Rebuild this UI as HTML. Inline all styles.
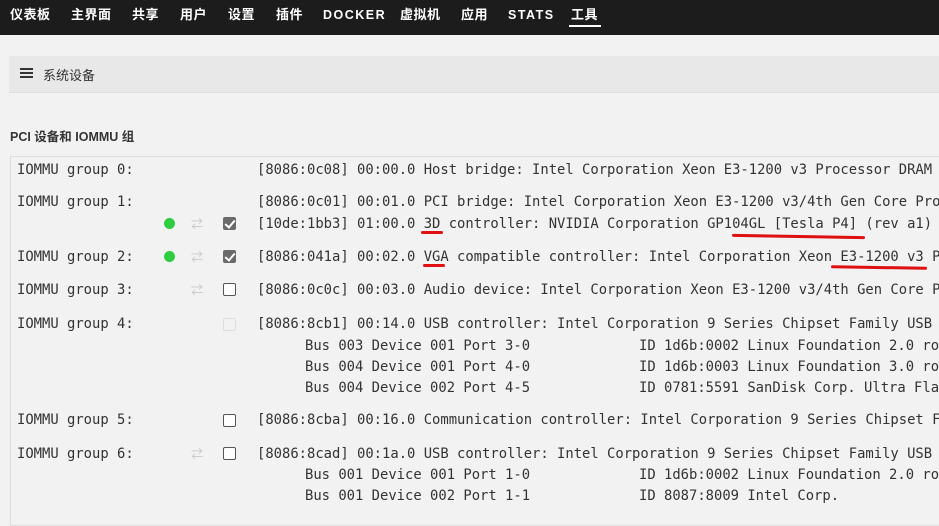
<!DOCTYPE html>
<html><head><meta charset="utf-8"><style>
*{margin:0;padding:0;box-sizing:border-box}
body{width:939px;height:517px;overflow:hidden;background:#f2f2f2;font-family:"Liberation Sans","Noto Sans CJK SC",sans-serif;position:relative}
.nav{position:absolute;left:0;top:0;width:939px;height:35px;background:#1c1c1c}
.nav span{position:absolute;top:6px;height:18px;line-height:18px;color:#fff;font-weight:bold;font-size:13px;letter-spacing:0.5px}
.nav span.l{letter-spacing:1.5px;font-size:12.5px}
.bar{position:absolute;left:9px;top:56px;width:930px;height:37px;background:#e8e8e8;border-bottom:1px solid #ddd}
.box{position:absolute;left:10px;top:156px;width:940px;height:370px;border:1px solid #ddd;background:#f2f2f2}
.m{position:absolute;font-family:"DejaVu Sans Mono","Liberation Mono",monospace;font-size:13.85px;color:#333;white-space:pre;line-height:16px}
.dot{position:absolute;width:11px;height:11px;border-radius:50%;background:#2ecc40}
.cb{position:absolute;width:13px;height:13px;border:1px solid #555;border-radius:2px;background:#fff}
.cb.on{background:#6a6a6a;border-color:#6a6a6a}
.cb.on:after{content:"";position:absolute;left:3px;top:0px;width:4px;height:8px;border:solid #fff;border-width:0 2px 2px 0;transform:rotate(40deg)}
.cb.dis{border-color:#ddd;background:#f2f2f2}
.rf{position:absolute;color:#c8c8c8;font-size:12px}
.ul{position:absolute;height:3px;background:#e01010;border-radius:2px}
</style></head><body>
<div class="nav">
<span style="left:10px">仪表板</span><span style="left:71px">主界面</span><span style="left:132px">共享</span><span style="left:180px">用户</span><span style="left:228px">设置</span><span style="left:276px">插件</span>
<span class="l" style="left:323px">DOCKER</span><span style="left:400px">虚拟机</span><span style="left:461px">应用</span><span class="l" style="left:508px">STATS</span><span style="left:571px">工具</span>
<div style="position:absolute;left:569px;top:25px;width:32px;height:2px;background:#fff"></div>
</div>
<div class="bar">
<div style="position:absolute;left:11px;top:12px;width:13px;height:2px;background:#333;box-shadow:0 4px 0 #333,0 8px 0 #333"></div>
<span style="position:absolute;left:34px;top:9px;font-size:13px;color:#333">系统设备</span>
</div>
<div style="position:absolute;left:10px;top:126px;font-size:12.5px;font-weight:bold;color:#333">PCI 设备和 IOMMU 组</div>
<div class="box"></div>
<div class="m" style="left:17px;top:162px">IOMMU group 0:</div>
<div class="m" style="left:257px;top:162px">[8086:0c08] 00:00.0 Host bridge: Intel Corporation Xeon E3-1200 v3 Processor DRAM</div>
<div class="m" style="left:17px;top:194px">IOMMU group 1:</div>
<div class="m" style="left:257px;top:194px">[8086:0c01] 00:01.0 PCI bridge: Intel Corporation Xeon E3-1200 v3/4th Gen Core Pro</div>
<div class="dot" style="left:164px;top:218px"></div><div class="rf" style="left:191px;top:215px">⇄</div><div class="cb on" style="left:223px;top:217px"></div>
<div class="m" style="left:257px;top:216px">[10de:1bb3] 01:00.0 3D controller: NVIDIA Corporation GP104GL [Tesla P4] (rev a1)</div>
<div class="ul" style="left:421px;top:231px;width:22px"></div>
<div class="ul" style="left:732px;top:235px;width:133px;transform:rotate(1deg)"></div>
<div class="m" style="left:17px;top:249px">IOMMU group 2:</div>
<div class="dot" style="left:164px;top:251px"></div><div class="rf" style="left:191px;top:248px">⇄</div><div class="cb on" style="left:223px;top:250px"></div>
<div class="m" style="left:257px;top:249px">[8086:041a] 00:02.0 VGA compatible controller: Intel Corporation Xeon E3-1200 v3 P</div>
<div class="ul" style="left:423px;top:264px;width:22px"></div>
<div class="ul" style="left:831px;top:266px;width:96px;transform:rotate(1deg)"></div>
<div class="m" style="left:17px;top:282px">IOMMU group 3:</div>
<div class="rf" style="left:191px;top:281px">⇄</div><div class="cb" style="left:223px;top:283px"></div>
<div class="m" style="left:257px;top:282px">[8086:0c0c] 00:03.0 Audio device: Intel Corporation Xeon E3-1200 v3/4th Gen Core Pro</div>
<div class="m" style="left:17px;top:316px">IOMMU group 4:</div>
<div class="cb dis" style="left:223px;top:318px"></div>
<div class="m" style="left:257px;top:316px">[8086:8cb1] 00:14.0 USB controller: Intel Corporation 9 Series Chipset Family USB</div>
<div class="m" style="left:305px;top:338px">Bus 003 Device 001 Port 3-0</div><div class="m" style="left:639px;top:338px">ID 1d6b:0002 Linux Foundation 2.0 ro</div>
<div class="m" style="left:305px;top:359px">Bus 004 Device 001 Port 4-0</div><div class="m" style="left:639px;top:359px">ID 1d6b:0003 Linux Foundation 3.0 ro</div>
<div class="m" style="left:305px;top:380px">Bus 004 Device 002 Port 4-5</div><div class="m" style="left:639px;top:380px">ID 0781:5591 SanDisk Corp. Ultra Fla</div>
<div class="m" style="left:17px;top:412px">IOMMU group 5:</div>
<div class="cb" style="left:223px;top:414px"></div>
<div class="m" style="left:257px;top:412px">[8086:8cba] 00:16.0 Communication controller: Intel Corporation 9 Series Chipset F</div>
<div class="m" style="left:17px;top:446px">IOMMU group 6:</div>
<div class="rf" style="left:191px;top:445px">⇄</div><div class="cb" style="left:223px;top:447px"></div>
<div class="m" style="left:257px;top:446px">[8086:8cad] 00:1a.0 USB controller: Intel Corporation 9 Series Chipset Family USB</div>
<div class="m" style="left:305px;top:467px">Bus 001 Device 001 Port 1-0</div><div class="m" style="left:639px;top:467px">ID 1d6b:0002 Linux Foundation 2.0 ro</div>
<div class="m" style="left:305px;top:488px">Bus 001 Device 002 Port 1-1</div><div class="m" style="left:639px;top:488px">ID 8087:8009 Intel Corp.</div>
</body></html>
